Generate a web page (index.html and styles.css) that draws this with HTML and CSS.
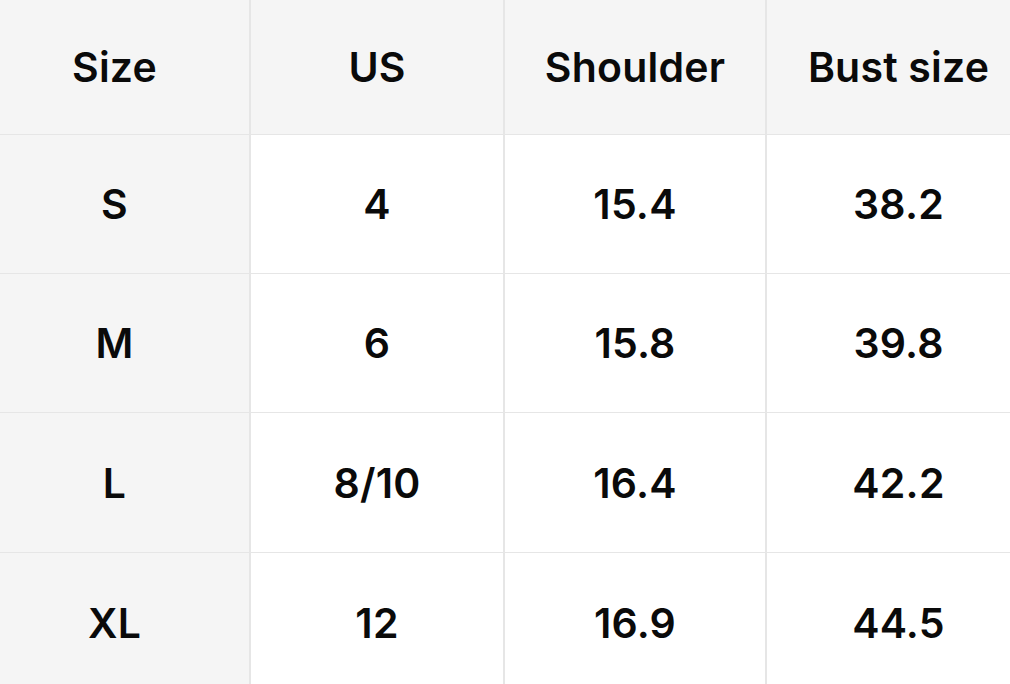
FILE: index.html
```html
<!DOCTYPE html>
<html lang="en">
<head>
<meta charset="utf-8">
<title>Size chart</title>
<link rel="stylesheet" href="styles.css">
</head>
<body>
<div class="frame">
  <div class="chart">
    <div class="cell head">Size</div>
    <div class="cell head">US</div>
    <div class="cell head">Shoulder</div>
    <div class="cell head">Bust size</div>

    <div class="cell side">S</div>
    <div class="cell">4</div>
    <div class="cell">15.4</div>
    <div class="cell">38.2</div>

    <div class="cell side">M</div>
    <div class="cell">6</div>
    <div class="cell">15.8</div>
    <div class="cell">39.8</div>

    <div class="cell side">L</div>
    <div class="cell">8/10</div>
    <div class="cell">16.4</div>
    <div class="cell">42.2</div>

    <div class="cell side">XL</div>
    <div class="cell">12</div>
    <div class="cell">16.9</div>
    <div class="cell">44.5</div>
  </div>
</div>
</body>
</html>
```
FILE: styles.css
```css
html, body {
  margin: 0;
  padding: 0;
  background: #ffffff;
}
body {
  width: 1010px;
  height: 684px;
  overflow: hidden;
  font-family: Inter, "Liberation Sans", Arial, sans-serif;
}
.frame {
  width: 1010px;
  height: 684px;
  overflow: hidden;
}
.chart {
  margin-left: -20px;
  width: 1050px;
  display: grid;
  grid-template-columns: 269px 252px 260px 263px;
  grid-template-rows: 134px 138px 138px 139px 140px;
  column-gap: 2px;
  row-gap: 1px;
  background: #e6e6e6;
}
.cell {
  display: flex;
  align-items: center;
  justify-content: center;
  background: #ffffff;
  color: #0a0a0a;
  font-size: 41px;
  font-weight: 600;
  letter-spacing: 0.2px;
}
.head, .side {
  background: #f5f5f5;
}
```
